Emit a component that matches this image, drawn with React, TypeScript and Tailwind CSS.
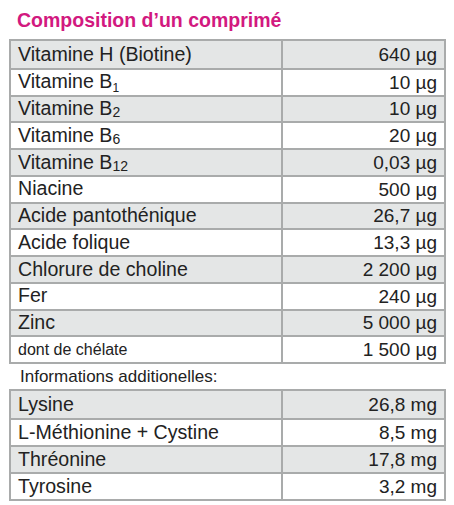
import React from "react"

type Row = {
  name: React.ReactNode
  value: string
  small?: boolean
}

const sub1 = (d: string) => (
  <span className="relative top-[4px] text-[12px]">{d}</span>
)
const sub2 = (d: string) => (
  <span className="relative top-[2px] text-[14px]">{d}</span>
)

const vitamins: Row[] = [
  { name: "Vitamine H (Biotine)", value: "640 µg" },
  { name: <>Vitamine B{sub1("1")}</>, value: "10 µg" },
  { name: <>Vitamine B{sub2("2")}</>, value: "10 µg" },
  { name: <>Vitamine B{sub2("6")}</>, value: "20 µg" },
  { name: <>Vitamine B{sub2("12")}</>, value: "0,03 µg" },
  { name: "Niacine", value: "500 µg" },
  { name: "Acide pantothénique", value: "26,7 µg" },
  { name: "Acide folique", value: "13,3 µg" },
  { name: "Chlorure de choline", value: "2 200 µg" },
  { name: "Fer", value: "240 µg" },
  { name: "Zinc", value: "5 000 µg" },
  { name: "dont de chélate", value: "1 500 µg", small: true },
]

const extras: Row[] = [
  { name: "Lysine", value: "26,8 mg" },
  { name: "L-Méthionine + Cystine", value: "8,5 mg" },
  { name: "Thréonine", value: "17,8 mg" },
  { name: "Tyrosine", value: "3,2 mg" },
]

function Table({ rows, rowClass }: { rows: Row[]; rowClass: string }) {
  return (
    <div className="ml-[9px] w-[437px] border-2 border-[#a9abab]">
      {rows.map((r, i) => (
        <div
          key={i}
          className={`flex ${rowClass} ${i > 0 ? "border-t-2 border-[#a9abab]" : ""} ${
            i % 2 === 0 ? "bg-[#e4e6e6]" : "bg-white"
          }`}
        >
          <div
            className={`w-[272px] flex items-center pl-[7px] border-r-2 border-[#a9abab] ${
              r.small ? "text-[16px]" : "text-[19.6px]"
            }`}
          >
            <span>{r.name}</span>
          </div>
          <div className="flex-1 flex items-center justify-end pr-[7px] text-[19px]">
            {r.value}
          </div>
        </div>
      ))}
    </div>
  )
}

export default function App() {
  return (
    <div
      className="w-[454px] h-[505px] bg-white text-[#222222] leading-none"
      style={{ fontFamily: '"Liberation Sans", Arial, sans-serif' }}
    >
      <div className="h-[39px] pl-[17px] pt-[11px]">
        <h1 className="text-[19.5px] font-bold text-[#d2197f] leading-none">
          Composition d’un comprimé
        </h1>
      </div>
      <Table rows={vitamins} rowClass="h-[26.75px] box-border" />
      <div className="h-[25px] flex items-center pl-[20px] text-[17px]">
        Informations additionelles:
      </div>
      <Table rows={extras} rowClass="h-[27px] box-border" />
    </div>
  )
}
